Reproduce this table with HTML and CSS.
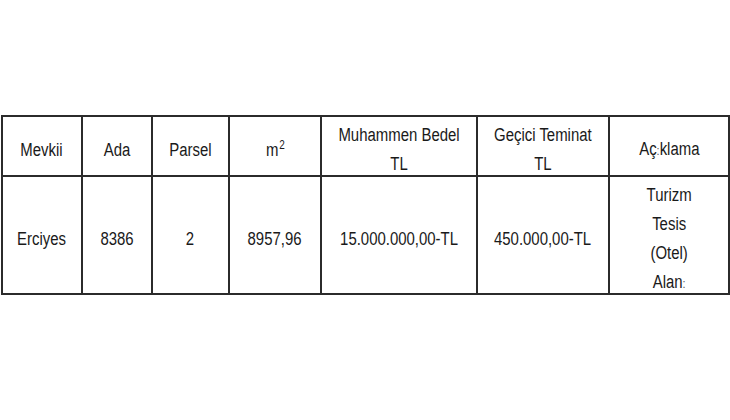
FILE: index.html
```html
<!DOCTYPE html>
<html lang="tr">
<head>
<meta charset="utf-8">
<link rel="stylesheet" href="styles.css">
</head>
<body>
<table class="ihale">
  <colgroup>
    <col class="c1"><col class="c2"><col class="c3"><col class="c4"><col class="c5"><col class="c6"><col class="c7">
  </colgroup>
  <tr class="head">
    <td><span class="t">Mevkii</span></td>
    <td><span class="t">Ada</span></td>
    <td><span class="t">Parsel</span></td>
    <td><span class="t">m<sup>2</sup></span></td>
    <td><span class="t">Muhammen Bedel<br>TL</span></td>
    <td><span class="t">Geçici Teminat<br>TL</span></td>
    <td><span class="t">Aç<span class="dot">:</span>klama</span></td>
  </tr>
  <tr class="body">
    <td><span class="t">Erciyes</span></td>
    <td><span class="t">8386</span></td>
    <td><span class="t">2</span></td>
    <td><span class="t">8957,96</span></td>
    <td><span class="t">15.000.000,00-TL</span></td>
    <td><span class="t">450.000,00-TL</span></td>
    <td><div class="desc"><span class="t">Turizm<br>Tesis<br>(Otel)<br>Alan<span class="dot">:</span></span></div></td>
  </tr>
</table>
</body>
</html>
```

FILE: styles.css
```css
html, body {
  margin: 0;
  background: #ffffff;
}
body {
  padding: 115px 0 0 1px;
  font-family: "Liberation Sans", Arial, sans-serif;
  font-size: 18px;
  color: #1a1a1a;
}
.ihale {
  border-collapse: collapse;
  table-layout: fixed;
  width: 728px;
}
.c1 { width: 80px; }
.c2 { width: 70px; }
.c3 { width: 77px; }
.c4 { width: 92px; }
.c5 { width: 156px; }
.c6 { width: 132px; }
.c7 { width: 120px; }
.ihale td {
  border: 2px solid #2b2b2b;
  padding: 0;
  text-align: center;
  vertical-align: middle;
  line-height: 29px;
  overflow: visible;
}
.head td { height: 58px; }
.body td { height: 116px; }
.t {
  display: inline-block;
  white-space: nowrap;
  transform: translateY(4px) scaleX(0.83);
  transform-origin: center center;
}
sup {
  font-size: 12px;
  line-height: 0;
  vertical-align: 7px;
  margin-left: 1px;
}
.dot {
  font-size: 13px;
  color: #555555;
}
.desc {
  height: 116px;
  display: flex;
  flex-direction: column;
  justify-content: center;
  align-items: center;
  overflow: visible;
}
```
